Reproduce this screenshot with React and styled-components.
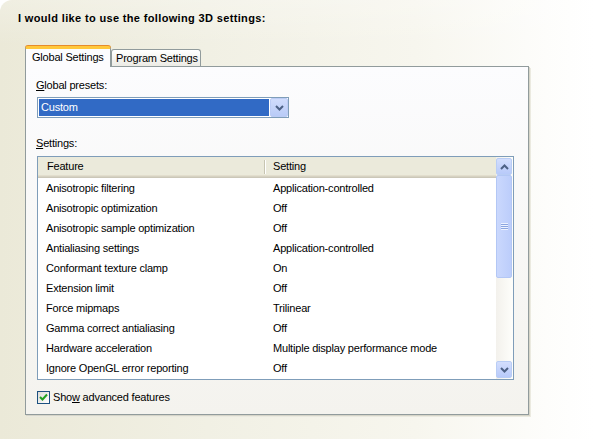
import React from "react";
import styled, { createGlobalStyle } from "styled-components";

const GlobalStyle = createGlobalStyle`
  html, body {
    margin: 0;
    padding: 0;
    background: #ffffff;
  }
  body {
    font-family: "Liberation Sans", Arial, sans-serif;
    font-size: 11px;
    letter-spacing: -0.2px;
    color: #000;
  }
`;

const settings = [
  ["Anisotropic filtering", "Application-controlled"],
  ["Anisotropic optimization", "Off"],
  ["Anisotropic sample optimization", "Off"],
  ["Antialiasing settings", "Application-controlled"],
  ["Conformant texture clamp", "On"],
  ["Extension limit", "Off"],
  ["Force mipmaps", "Trilinear"],
  ["Gamma correct antialiasing", "Off"],
  ["Hardware acceleration", "Multiple display performance mode"],
  ["Ignore OpenGL error reporting", "Off"],
];

function Chevron({ up }) {
  return (
    <svg width="9" height="6" viewBox="0 0 9 6">
      <path
        d={up ? "M1 5 L4.5 1.5 L8 5" : "M1 1 L4.5 4.5 L8 1"}
        fill="none"
        stroke="#4d6185"
        strokeWidth="2"
      />
    </svg>
  );
}

export default function App() {
  return (
    <>
      <GlobalStyle />
      <Page>
        <Title>I would like to use the following 3D settings:</Title>
        <TabArea>
          <TabStrip>
            <Tab $active>Global Settings</Tab>
            <Tab>Program Settings</Tab>
          </TabStrip>
          <Pane>
            <Label>
              <u>G</u>lobal presets:
            </Label>
            <Combo>
              <ComboValue>Custom</ComboValue>
              <ComboButton>
                <Chevron />
              </ComboButton>
            </Combo>

            <Label $gap>
              <u>S</u>ettings:
            </Label>
            <ListView>
              <ListBody>
                <Header>
                  <HeaderCell $width={227}>Feature</HeaderCell>
                  <HeaderCell>Setting</HeaderCell>
                </Header>
                {settings.map(([feature, value]) => (
                  <Row key={feature}>
                    <Cell $width={227}>{feature}</Cell>
                    <Cell>{value}</Cell>
                  </Row>
                ))}
              </ListBody>
              <ScrollBar>
                <ScrollButton>
                  <Chevron up />
                </ScrollButton>
                <Thumb>
                  <Grip />
                </Thumb>
                <Track />
                <ScrollButton>
                  <Chevron />
                </ScrollButton>
              </ScrollBar>
            </ListView>

            <CheckRow>
              <CheckBox>
                <svg width="9" height="9" viewBox="0 0 9 9">
                  <path d="M1 4 L3.5 6.5 L8 1.5" fill="none" stroke="#21a121" strokeWidth="2" />
                </svg>
              </CheckBox>
              <span>
                Sho<u>w</u> advanced features
              </span>
            </CheckRow>
          </Pane>
        </TabArea>
      </Page>
    </>
  );
}

const Page = styled.div`
  width: 594px;
  height: 439px;
  box-sizing: border-box;
  padding: 12px 0 0 18px;
  border-top-left-radius: 12px;
  overflow: hidden;
  background:
    linear-gradient(to bottom, rgba(255, 255, 255, 0.25), rgba(255, 255, 255, 0) 45px),
    linear-gradient(to right, #ebe9d8 0%, #f1f0e4 35%, #f7f6ee 70%, #fdfdfb 92%, #ffffff 100%);
`;

const Title = styled.div`
  font-weight: bold;
  letter-spacing: 0.35px;
  line-height: 13px;
  height: 13px;
  margin-bottom: 21px;
`;

const TabArea = styled.div`
  margin-left: 7px;
  width: 504px;
`;

const TabStrip = styled.div`
  display: flex;
  align-items: flex-end;
  height: 20px;
  position: relative;
  z-index: 1;
`;

const Tab = styled.div`
  box-sizing: border-box;
  display: flex;
  align-items: center;
  border: 1px solid #919b9c;
  border-radius: 3px 3px 0 0;
  white-space: nowrap;
  ${(p) =>
    p.$active
      ? `
    width: 86px;
    height: 21px;
    margin-bottom: -1px;
    padding: 0 0 2px 6px;
    border-top: 3px solid #ffc83c;
    border-bottom: none;
    box-shadow: 0 -1px 0 #e68b2c;
    background: #fcfcfe;
  `
      : `
    width: 90px;
    height: 17px;
    padding-left: 4px;
    border-bottom: none;
    background: linear-gradient(to bottom, #ffffff, #ecebe5);
  `}
`;

const Pane = styled.div`
  box-sizing: border-box;
  height: 349px;
  padding: 12px 14px 0 10px;
  border: 1px solid #919b9c;
  background: linear-gradient(to bottom, #fcfcfe, #f4f3ee);
  box-shadow: 1px 1px 0 #d6d5c8, 2px 2px 0 #ebeae0;
`;

const Label = styled.div`
  line-height: 13px;
  margin-top: ${(p) => (p.$gap ? "19px" : "0")};
  margin-bottom: ${(p) => (p.$gap ? "6px" : "5px")};
`;

const Combo = styled.div`
  box-sizing: border-box;
  display: flex;
  width: 252px;
  height: 21px;
  margin-left: 1px;
  border: 1px solid #7f9db9;
  background: #fff;
`;

const ComboValue = styled.div`
  flex: 1;
  margin: 1px;
  padding-left: 2px;
  line-height: 17px;
  background: #316ac5;
  color: #fff;
`;

const ComboButton = styled.div`
  box-sizing: border-box;
  width: 18px;
  display: flex;
  align-items: center;
  justify-content: center;
  border: 1px solid #bcccf5;
  border-radius: 2px;
  background: linear-gradient(to bottom, #d0dcfc, #b9cbf7);
`;

const ListView = styled.div`
  box-sizing: border-box;
  display: flex;
  width: 477px;
  height: 224px;
  margin-left: 1px;
  border: 1px solid #7f9db9;
  background: #fff;
`;

const ListBody = styled.div`
  flex: 1;
  overflow: hidden;
`;

const Header = styled.div`
  display: flex;
  height: 21px;
  background: #ebeadb;
  box-shadow: inset 0 -1px 0 #cbc7b8, inset 0 -2px 0 #d6d2c2, inset 0 -3px 0 #e2decd;
`;

const HeaderCell = styled.div`
  box-sizing: border-box;
  ${(p) => (p.$width ? `width: ${p.$width}px;` : "flex: 1;")}
  padding-left: ${(p) => (p.$width ? "9px" : "8px")};
  line-height: 19px;
  position: relative;
  ${(p) =>
    p.$width &&
    `
    &::after {
      content: "";
      position: absolute;
      right: 0;
      top: 3px;
      height: 14px;
      width: 1px;
      background: #c7c5b2;
      box-shadow: 1px 0 0 #ffffff;
    }
  `}
`;

const Row = styled.div`
  display: flex;
  height: 20px;
  align-items: center;
`;

const Cell = styled.div`
  box-sizing: border-box;
  ${(p) => (p.$width ? `width: ${p.$width}px;` : "flex: 1;")}
  padding-left: 8px;
  white-space: nowrap;
`;

const ScrollBar = styled.div`
  box-sizing: border-box;
  width: 17px;
  display: flex;
  flex-direction: column;
  padding: 1px 1px 1px 0;
  background: linear-gradient(to right, #f3f1ec, #fefefb);
`;

const ScrollButton = styled.div`
  box-sizing: border-box;
  height: 17px;
  display: flex;
  align-items: center;
  justify-content: center;
  border: 1px solid #b9cdf5;
  border-radius: 2px;
  background: linear-gradient(to bottom, #d3defd, #b8cafa);
`;

const Thumb = styled.div`
  box-sizing: border-box;
  height: 103px;
  display: flex;
  align-items: center;
  justify-content: center;
  border: 1px solid #b3c7f5;
  border-radius: 2px;
  background: linear-gradient(to right, #cad8fd, #bccdfb);
`;

const Grip = styled.div`
  width: 7px;
  height: 7px;
  background: repeating-linear-gradient(
    to bottom,
    #eef3ff 0,
    #eef3ff 1px,
    #8ca6e0 1px,
    #8ca6e0 2px
  );
`;

const Track = styled.div`
  flex: 1;
`;

const CheckRow = styled.label`
  display: flex;
  align-items: center;
  gap: 3px;
  margin-top: 11px;
  margin-left: 1px;
  line-height: 13px;
`;

const CheckBox = styled.span`
  box-sizing: border-box;
  width: 13px;
  height: 13px;
  display: flex;
  align-items: center;
  justify-content: center;
  border: 1px solid #1c5180;
  background: linear-gradient(135deg, #dcdcd7, #ffffff);
`;
